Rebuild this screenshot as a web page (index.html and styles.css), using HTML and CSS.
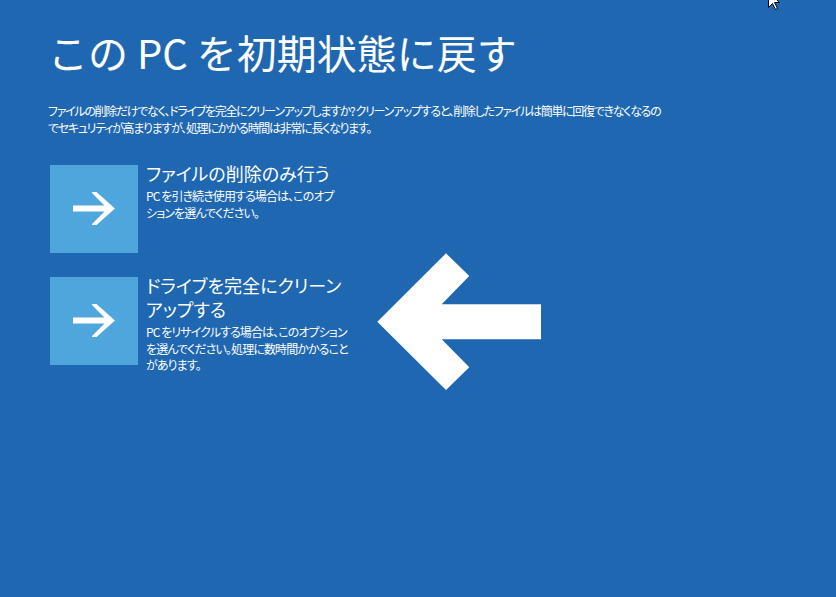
FILE: index.html
```html
<!DOCTYPE html>
<html lang="ja">
<head>
<meta charset="utf-8">
<link rel="stylesheet" href="styles.css">
</head>
<body>
<div class="page">
  <h1 class="title">この PC を初期状態に戻す</h1>
  <p class="intro">ファイルの削除だけでなく、ドライブを完全にクリーンアップしますか? クリーンアップすると、削除したファイルは簡単に回復できなくなるの<br>でセキュリティが高まりますが、処理にかかる時間は非常に長くなります。</p>
  <div class="options">
    <div class="option">
      <div class="tile">
        <svg width="88" height="88" viewBox="0 0 88 88"><path d="M23 40.5H58V46.5H23Z M42 27L46.5 27L65 43.5L46.5 60L42 60L42 59L57.5 43.5L42 28Z" fill="#fff"/></svg>
      </div>
      <div class="text">
        <div class="opt-title">ファイルの削除のみ行う</div>
        <div class="opt-desc">PC を引き続き使用する場合は、このオプ<br>ションを選んでください。</div>
      </div>
    </div>
    <div class="option">
      <div class="tile">
        <svg width="88" height="88" viewBox="0 0 88 88"><path d="M23 40.5H58V46.5H23Z M42 27L46.5 27L65 43.5L46.5 60L42 60L42 59L57.5 43.5L42 28Z" fill="#fff"/></svg>
      </div>
      <div class="text">
        <div class="opt-title">ドライブを完全にクリーン<br>アップする</div>
        <div class="opt-desc">PC をリサイクルする場合は、このオプション<br>を選んでください。処理に数時間かかること<br>があります。</div>
      </div>
    </div>
  </div>
</div>
<svg class="big-arrow" width="170" height="140" viewBox="377 253 170 140"><polygon points="377.3,321.7 446,253.3 469.3,276 441.7,304.3 541,304.3 541,339.3 441.7,339.3 469.3,367.3 446,390" fill="#fff"/></svg>
<svg class="cursor" width="14" height="20" viewBox="0 0 14 20"><polygon points="0.5,0.5 0.5,16.5 4.5,12.5 7.5,18.5 9.5,17.5 6.5,11.5 11.5,11.5" fill="#fff" stroke="#000" stroke-width="1"/></svg>
</body>
</html>
```
FILE: styles.css
```css
html, body {
  margin: 0;
  padding: 0;
  height: 100%;
}
body {
  background: #1f67b1;
  color: #fff;
  font-family: "Noto Sans CJK JP", "Noto Sans", sans-serif;
  font-feature-settings: "palt";
  overflow: hidden;
  position: relative;
}
.page {
  padding: 24px 0 0 48px;
}
.title {
  margin: 0;
  font-size: 40px;
  font-weight: 400;
  line-height: 56px;
  font-feature-settings: normal;
}
.intro {
  margin: 22px 0 0;
  font-size: 12px;
  line-height: 17px;
  letter-spacing: -1.3px;
  white-space: nowrap;
}
.options {
  display: flex;
  flex-direction: column;
  gap: 24px;
  margin-top: 29px;
  padding-left: 2px;
}
.option {
  display: flex;
  gap: 8px;
  align-items: flex-start;
}
.tile {
  width: 88px;
  height: 88px;
  background: #4ea6dc;
  flex: none;
}
.tile svg {
  display: block;
}
.text {
  margin-top: -4px;
}
.opt-title {
  font-size: 18px;
  line-height: 24px;
  white-space: nowrap;
}
.opt-desc {
  margin-top: 3px;
  font-size: 12px;
  line-height: 16.5px;
  letter-spacing: -0.9px;
  white-space: nowrap;
}
.big-arrow {
  position: absolute;
  left: 377px;
  top: 253px;
}
.cursor {
  position: absolute;
  left: 768px;
  top: -9px;
}
```
